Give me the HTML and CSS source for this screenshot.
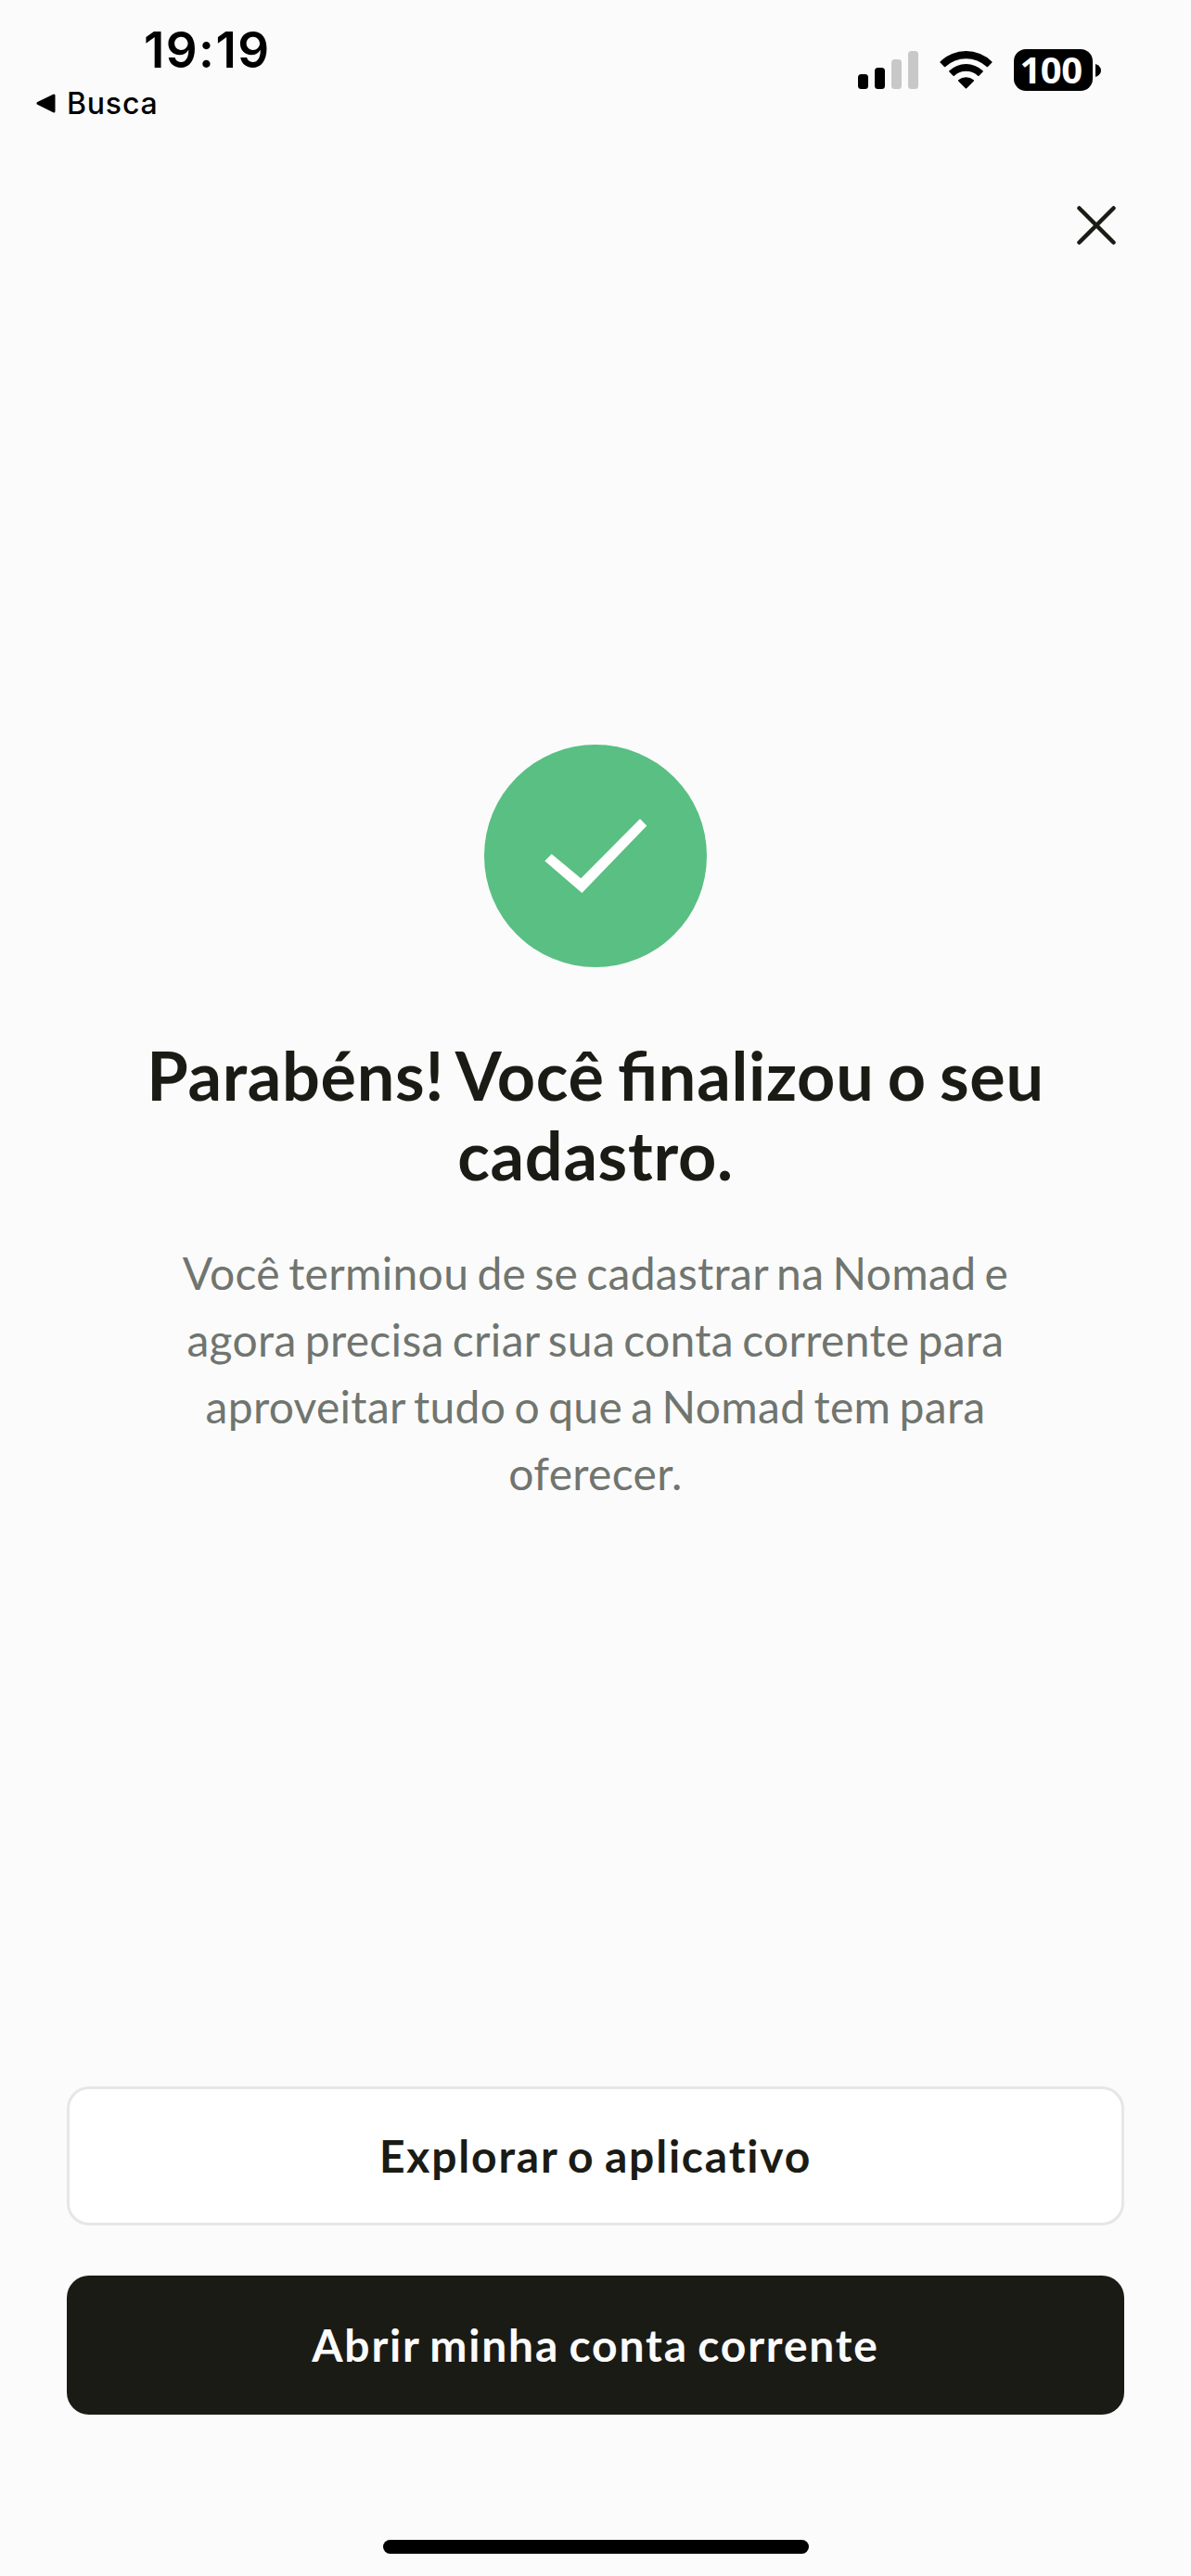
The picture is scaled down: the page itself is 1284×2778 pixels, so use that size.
FILE: index.html
```
<!DOCTYPE html>
<html lang="pt-BR">
<head>
    <meta charset="UTF-8">
    <meta name="viewport" content="width=device-width, initial-scale=1.0">
    <title>Cadastro finalizado</title>
    <link rel="stylesheet" href="styles.css">
</head>
<body>
    <div class="screen">
        <div class="status-bar">
            <div class="status-left">
                <div class="time">19:19</div>
                <div class="back">
                    <svg width="21" height="21" viewBox="0 0 21 21">
                        <path d="M2 10.4 L19 2 V19 Z" stroke="#000" stroke-width="3" stroke-linejoin="round"/>
                    </svg>
                    <span>Busca</span>
                </div>
            </div>
            <div class="status-right">
                <svg class="signal" width="65" height="41" viewBox="0 0 65 41">
                    <rect x="0" y="25" width="11" height="16" rx="3.5"/>
                    <rect x="18" y="18" width="11" height="23" rx="3.5"/>
                    <rect class="off" x="36" y="9" width="11" height="32" rx="3.5"/>
                    <rect class="off" x="54" y="0" width="11" height="41" rx="3.5"/>
                </svg>
                <svg class="wifi" width="57" height="42" viewBox="0 0 57 42">
                    <path d="M0.6 12.4 A40 40 0 0 1 56.4 12.4 Q57 13 56.4 13.6 L52 18 Q51.4 18.6 50.8 18 A32.5 32.5 0 0 0 6.2 18 Q5.6 18.6 5 18 L0.6 13.6 Q0 13 0.6 12.4 Z"/>
                    <path d="M10.4 22.2 A26.5 26.5 0 0 1 46.6 22.2 Q47.2 22.8 46.6 23.4 L42.4 27.8 Q41.8 28.4 41.2 27.8 A18.5 18.5 0 0 0 15.8 27.8 Q15.2 28.4 14.6 27.8 L10.4 23.4 Q9.8 22.8 10.4 22.2 Z"/>
                    <path d="M20.2 32.2 A13 13 0 0 1 36.8 32.2 Q37.4 32.8 36.8 33.4 L29.1 41.3 Q28.5 41.9 27.9 41.3 L20.2 33.4 Q19.6 32.8 20.2 32.2 Z"/>
                </svg>
                <div class="battery">
                    <div class="level">100</div>
                    <svg width="6" height="14" viewBox="0 0 6 14">
                        <path d="M0 0 C4 1.5 6 4 6 7 S4 12.5 0 14 Z"/>
                    </svg>
                </div>
            </div>
        </div>

        <div class="header">
            <button class="close" aria-label="Fechar">
                <svg width="42" height="42" viewBox="0 0 42 42">
                    <path d="M2.5 2.5 L39.5 39.5 M39.5 2.5 L2.5 39.5"/>
                </svg>
            </button>
        </div>

        <div class="content">
            <svg class="success" width="240" height="240" viewBox="0 0 240 240">
                <circle cx="120" cy="120" r="120" fill="#59bf83"/>
                <path d="M65.3 125.5 L72.7 118 L104.3 144.3 L168 80 L175.3 87.5 L105.4 160 Z" fill="#fff"/>
            </svg>
            <h1>Parabéns! Você finalizou o seu cadastro.</h1>
            <p>Você terminou de se cadastrar na Nomad e agora precisa criar sua conta corrente para aproveitar tudo o que a Nomad tem para oferecer.</p>
        </div>

        <div class="actions">
            <button class="btn btn-light">Explorar o aplicativo</button>
            <button class="btn btn-dark">Abrir minha conta corrente</button>
        </div>

        <div class="home-bar"></div>
    </div>
</body>
</html>
```
FILE: styles.css
```
* {
    box-sizing: border-box;
}
body {
    margin: 0;
    background-color: #fbfbfb;
    font-family: Lato, sans-serif;
    color: #1b1b15;
}
button {
    font-family: inherit;
    cursor: pointer;
}
svg {
    display: block;
}
.screen {
    width: 1284px;
    height: 2778px;
    display: flex;
    flex-direction: column;
}

/* status bar */
.status-bar {
    height: 141px;
    display: flex;
    justify-content: space-between;
    padding: 24px 97px 0 39px;
    font-family: Inter, sans-serif;
    color: #000;
}
.time {
    padding-left: 116px;
    font-size: 53px;
    font-weight: 600;
    letter-spacing: 1.4px;
    line-height: 60px;
}
.back {
    display: flex;
    align-items: center;
    gap: 12px;
    height: 40px;
    margin-top: 7px;
    font-size: 32px;
    font-weight: 500;
    letter-spacing: 0.8px;
}
.status-right {
    display: flex;
    align-items: flex-start;
    padding-top: 29px;
}
.signal {
    margin: 2px 23px 0 0;
}
.signal .off {
    fill: #c8c8c8;
}
.wifi {
    margin: 1px 23px 0 0;
}
.battery {
    display: flex;
    align-items: center;
    gap: 3px;
}
.level {
    width: 85px;
    height: 45px;
    padding-right: 5px;
    border-radius: 13px;
    background-color: #000;
    color: #fff;
    font-family: "Open Sans", sans-serif;
    font-size: 40px;
    font-weight: 700;
    letter-spacing: -0.5px;
    line-height: 44px;
    text-align: center;
}

/* close button */
.header {
    display: flex;
    justify-content: flex-end;
    padding: 81px 81px 0 0;
}
.close {
    padding: 0;
    border: none;
    background: none;
}
.close path {
    fill: none;
    stroke: #1b1b15;
    stroke-width: 4.5;
    stroke-linecap: round;
}

/* message */
.content {
    flex: 1;
    display: flex;
    flex-direction: column;
    align-items: center;
    padding: 539px 144px 0;
    text-align: center;
}
h1 {
    margin: 73px 0 49px;
    font-size: 72px;
    font-weight: 700;
    font-feature-settings: "liga" 1;
    letter-spacing: 0.7px;
    word-spacing: -4px;
    line-height: 86px;
}
p {
    width: 920px;
    margin: 0;
    color: #70756f;
    font-size: 48px;
    letter-spacing: 0.3px;
    word-spacing: -3.4px;
    line-height: 72px;
}

/* buttons */
.actions {
    display: flex;
    flex-direction: column;
    gap: 54px;
    padding: 0 72px;
}
.btn {
    height: 150px;
    padding: 0 0 2px;
    border: none;
    border-radius: 24px;
    font-size: 48px;
    font-weight: 700;
    letter-spacing: 1.8px;
    word-spacing: -3px;
}
.btn-light {
    border: 3px solid #e6e6e6;
    background-color: #fff;
    color: #1b1b15;
}
.btn-dark {
    background-color: #1b1b15;
    color: #fbfbfb;
}

.home-bar {
    width: 459px;
    height: 15px;
    margin: 135px auto 24px;
    border-radius: 8px;
    background-color: #000;
}
```
